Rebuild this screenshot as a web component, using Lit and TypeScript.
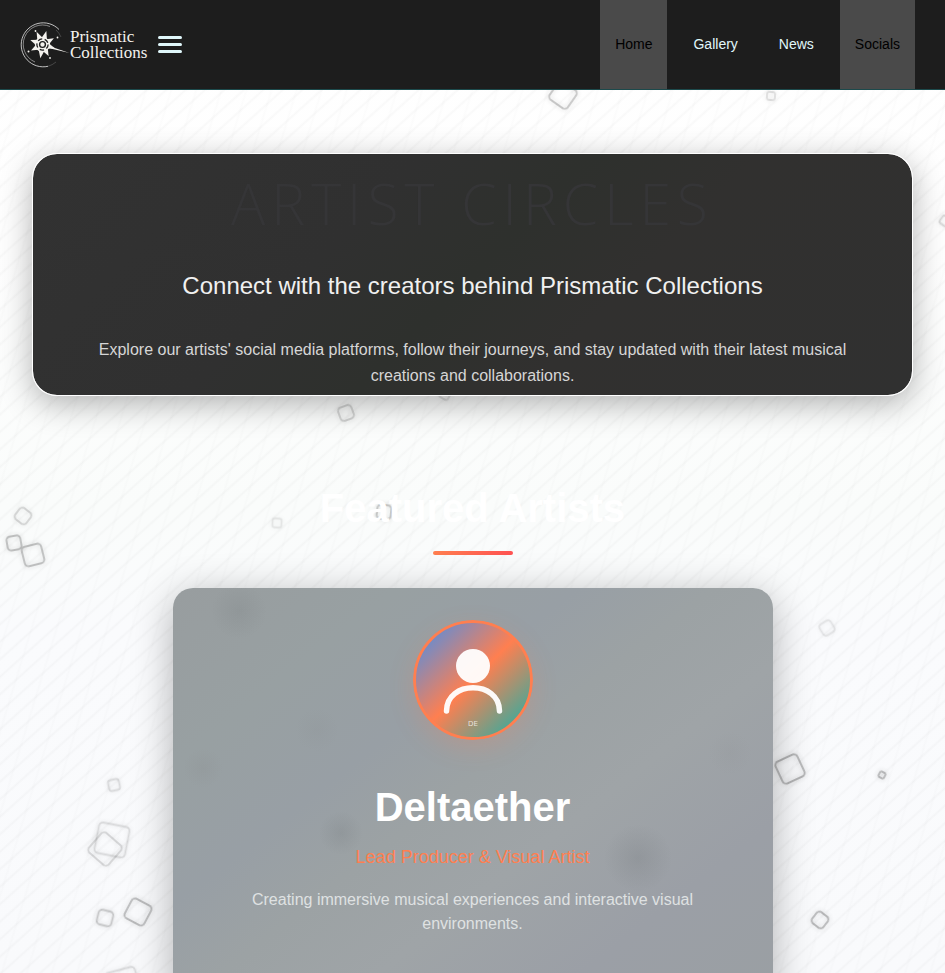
import { LitElement, html, svg, css } from "lit";
import { customElement } from "lit/decorators.js";

type Square = [x: number, y: number, size: number, angle: number, alpha: number];

const SQUARES: Square[] = [
  [563, 95, 22, 35, 0.25],
  [771, 96, 8, 5, 0.15],
  [871, 157, 8, 20, 0.15],
  [945, 221, 9, 35, 0.18],
  [445, 394, 10, 30, 0.14],
  [346, 413, 14, -20, 0.2],
  [23, 516, 14, 38, 0.18],
  [14, 543, 14, -10, 0.28],
  [33, 555, 20, -14, 0.28],
  [277, 523, 9, 5, 0.1],
  [384, 512, 14, 6, 0.26],
  [827, 628, 13, -32, 0.11],
  [790, 769, 24, -25, 0.32],
  [882, 775, 6, 28, 0.3],
  [820, 920, 14, 38, 0.3],
  [114, 785, 11, -12, 0.15],
  [112, 840, 31, 11, 0.15],
  [105, 849, 26, 41, 0.17],
  [105, 918, 15, 14, 0.24],
  [138, 912, 22, 28, 0.29],
  [123, 985, 31, -15, 0.15],
];

// Rays of the emblem: direction in degrees, length from the centre.
const RAYS = [
  [-115, 14], [-74, 14], [-29, 13], [17, 13], [62, 13], [99, 14], [152, 13], [200, 13],
];

@customElement("prism-logo")
export class PrismLogo extends LitElement {
  static styles = css`
    :host { display: block; }
    .logo {
      display: flex;
      align-items: center;
      color: #f4f2ee;
      text-decoration: none;
    }
    .mark { display: block; width: 50px; height: 46px; }
    .words {
      width: min-content;
      font: 17px/16px "Liberation Serif", serif;
    }
  `;

  render() {
    return html`
      <a class="logo" href="#">
        <svg class="mark" viewBox="0 0 50 46" aria-hidden="true">
          <g fill="none" stroke="#e8e8e8">
            <path d="M39 7.500A22 22 0 1 0 28 44.300" stroke-width="1" opacity=".8" />
            <path d="M30 4.500A19 19 0 1 0 15 40" stroke-width=".8" opacity=".65" />
            <path d="M28 44.300A22 22 0 0 0 36 40" stroke-width=".7" opacity=".3" />
            <path d="M36 8A19 19 0 0 1 41 15" stroke-width=".6" opacity=".35" />
          </g>
          <g transform="translate(22.500 22.500)" fill="#f4f2ee">
            ${RAYS.map(([a, r]) => svg`<path transform="rotate(${a})" d="M4 -3.600L${r} 0L4 3.600Z" />`)}
            <path d="M8 2L27 8.500L8 4Z" />
            <circle r="7.600" />
            <circle r="5.600" fill="none" stroke="#1d1d1d" stroke-width="1.300" stroke-dasharray="4.400 2.600" />
            <circle r="2.900" fill="none" stroke="#1d1d1d" stroke-width="1.400" />
            <circle cx="-7" cy="-13.500" r=".9" />
            <circle cx="15" cy="-7" r=".9" />
            <circle cx="-14" cy="7" r="1" />
            <circle cx="7.500" cy="13.500" r=".9" />
          </g>
        </svg>
        <span class="words">Prismatic Collections</span>
      </a>
    `;
  }
}

@customElement("app-root")
export class AppRoot extends LitElement {
  static styles = css`
    :host {
      display: block;
      position: relative;
      height: 100vh;
      overflow: hidden;
      font-family: "Liberation Sans", Arial, sans-serif;
      background:
        repeating-linear-gradient(138deg, rgba(0, 0, 0, 0) 0 7px, rgba(0, 0, 0, 0.024) 9px, rgba(0, 0, 0, 0) 11px 13px),
        repeating-linear-gradient(107deg, rgba(0, 0, 0, 0) 0 20px, rgba(0, 0, 0, 0.01) 22px, rgba(0, 0, 0, 0) 24px),
        linear-gradient(180deg, #ffffff 0%, #fefefe 25%, #fafcfb 52%, #fafbfd 65%, #f9fafc 100%);
    }
    .squares {
      position: absolute;
      inset: 0;
      width: 100%;
      height: 100%;
      pointer-events: none;
    }
    .bar {
      position: relative;
      display: flex;
      justify-content: space-between;
      height: 89px;
      padding: 0 30px 0 20px;
      background: #1d1d1d;
      border-bottom: 1px solid #1c4a4c;
    }
    .brand { display: flex; align-items: center; gap: 11px; }
    .menu {
      display: flex;
      flex-direction: column;
      gap: 4px;
      padding: 0;
      border: 0;
      background: none;
    }
    .menu span {
      width: 24px;
      height: 3px;
      border-radius: 2px;
      background: #e0f7fa;
    }
    .links { display: flex; gap: 11px; }
    .link {
      display: flex;
      align-items: center;
      padding: 0 15px 2px;
      font-size: 14px;
      color: #e0f7fa;
      text-decoration: none;
    }
    .link.active { background: #4a4a4a; color: #000; }
    main { position: relative; padding: 63px 32px 0; }
    .hero {
      box-sizing: border-box;
      padding: 16px 32px 6px;
      border: 1px solid rgba(255, 255, 255, 0.9);
      border-radius: 25px;
      text-align: center;
      background: linear-gradient(135deg, #323232 0%, #303030 35%, #2e302d 50%, #31302f 65%, #303030 100%);
      background-clip: padding-box;
      box-shadow: 0 8px 32px rgba(0, 0, 0, 0.3);
    }
    h1 {
      margin: 0 0 36px;
      font: 300 57px/66px "Open Sans", sans-serif;
      letter-spacing: 6px;
      color: #353537;
    }
    .lead { margin: 0 0 37px; font-size: 24px; line-height: 28px; color: #f0f0f0; }
    .intro { margin: 0; font-size: 16px; line-height: 26px; color: #d6d6d6; }
    .featured {
      display: flex;
      flex-direction: column;
      align-items: center;
      padding-top: 88px;
    }
    h2 {
      margin: 0 0 19px;
      font-size: 40px;
      line-height: 48px;
      color: #fff;
    }
    .rule {
      width: 80px;
      height: 4px;
      margin-bottom: 33px;
      border-radius: 2px;
      background: linear-gradient(90deg, #ff7f50, #ff5252);
    }
    .card {
      box-sizing: border-box;
      width: 100%;
      max-width: 600px;
      padding: 32px 64px 64px;
      border-radius: 20px;
      display: flex;
      flex-direction: column;
      align-items: center;
      text-align: center;
      background:
        radial-gradient(circle at 66px 23px, rgba(80, 85, 88, 0.1), transparent 28px),
        radial-gradient(circle at 30px 180px, rgba(110, 105, 105, 0.08), transparent 20px),
        radial-gradient(circle at 144px 142px, rgba(110, 110, 110, 0.06), transparent 22px),
        radial-gradient(circle at 168px 245px, rgba(80, 85, 88, 0.12), transparent 22px),
        radial-gradient(circle at 465px 270px, rgba(80, 85, 88, 0.14), transparent 34px),
        radial-gradient(circle at 557px 165px, rgba(110, 110, 110, 0.05), transparent 22px),
        linear-gradient(142deg, #989d9f 0%, #98a0a2 20%, #989fa5 36%, #9ca2a4 48%, #9fa4a7 62%, #9b9fa6 80%, #9a9fa3 100%);
      box-shadow: 0 8px 40px rgba(0, 0, 0, 0.3);
    }
    .avatar {
      display: block;
      width: 120px;
      height: 120px;
      border-radius: 50%;
      box-shadow: 0 8px 24px rgba(255, 127, 80, 0.22);
    }
    .initials { font: 7px "DejaVu Sans", sans-serif; fill: rgba(255, 255, 255, 0.75); }
    h3 { margin: 43px 0 15px; font-size: 40px; line-height: 48px; color: #fff; }
    .role { margin: 0 0 20px; font-size: 18px; line-height: 22px; color: #ff7f50; }
    .about { margin: 0; font-size: 16px; line-height: 24px; color: #dfe1e2; }
  `;

  render() {
    return html`
      <svg class="squares" aria-hidden="true">
        <defs>
          <filter id="glow" x="-100%" y="-100%" width="300%" height="300%">
            <feGaussianBlur stdDeviation="2.500" />
          </filter>
          <filter id="soft" x="-50%" y="-50%" width="200%" height="200%">
            <feGaussianBlur stdDeviation=".7" />
          </filter>
        </defs>
        ${SQUARES.map(([x, y, size, angle, alpha]) => {
          const start = -size / 2;
          const radius = Math.min(4, size / 4);
          return svg`
            <g transform="translate(${x} ${y}) rotate(${angle})" opacity=${alpha} fill="none" stroke="#222">
              <rect x=${start} y=${start} width=${size} height=${size} rx=${radius} stroke-width="3" opacity=".4" filter="url(#glow)" />
              <rect x=${start} y=${start} width=${size} height=${size} rx=${radius} stroke-width="1.800" filter="url(#soft)" />
            </g>`;
        })}
      </svg>
      <header class="bar">
        <div class="brand">
          <prism-logo></prism-logo>
          <button class="menu" aria-label="Menu"><span></span><span></span><span></span></button>
        </div>
        <nav class="links">
          <a class="link active" href="#">Home</a>
          <a class="link" href="#">Gallery</a>
          <a class="link" href="#">News</a>
          <a class="link active" href="#">Socials</a>
        </nav>
      </header>
      <main>
        <section class="hero">
          <h1>ARTIST CIRCLES</h1>
          <p class="lead">Connect with the creators behind Prismatic Collections</p>
          <p class="intro">
            Explore our artists' social media platforms, follow their journeys, and stay updated with their latest
            musical creations and collaborations.
          </p>
        </section>
        <section class="featured">
          <h2>Featured Artists</h2>
          <div class="rule"></div>
          <article class="card">
            <svg class="avatar" viewBox="0 0 120 120" role="img" aria-label="Deltaether">
              <defs>
                <linearGradient id="tint" x1="0" y1="0" x2="1" y2="1">
                  <stop offset="0.120" stop-color="#6a8cce" />
                  <stop offset="0.500" stop-color="#ff7f50" />
                  <stop offset="0.880" stop-color="#45a898" />
                </linearGradient>
              </defs>
              <circle cx="60" cy="60" r="58.500" fill="url(#tint)" stroke="#ff7f50" stroke-width="3" />
              <circle cx="60" cy="46" r="17" fill="#fff" opacity=".95" />
              <path d="M33.500 91C33.500 60 86.500 60 86.500 91" fill="none" stroke="#fff" stroke-width="5.500" stroke-linecap="round" opacity=".95" />
              <text class="initials" x="60" y="106" text-anchor="middle">DE</text>
            </svg>
            <h3>Deltaether</h3>
            <p class="role">Lead Producer &amp; Visual Artist</p>
            <p class="about">Creating immersive musical experiences and interactive visual environments.</p>
          </article>
        </section>
      </main>
    `;
  }
}
